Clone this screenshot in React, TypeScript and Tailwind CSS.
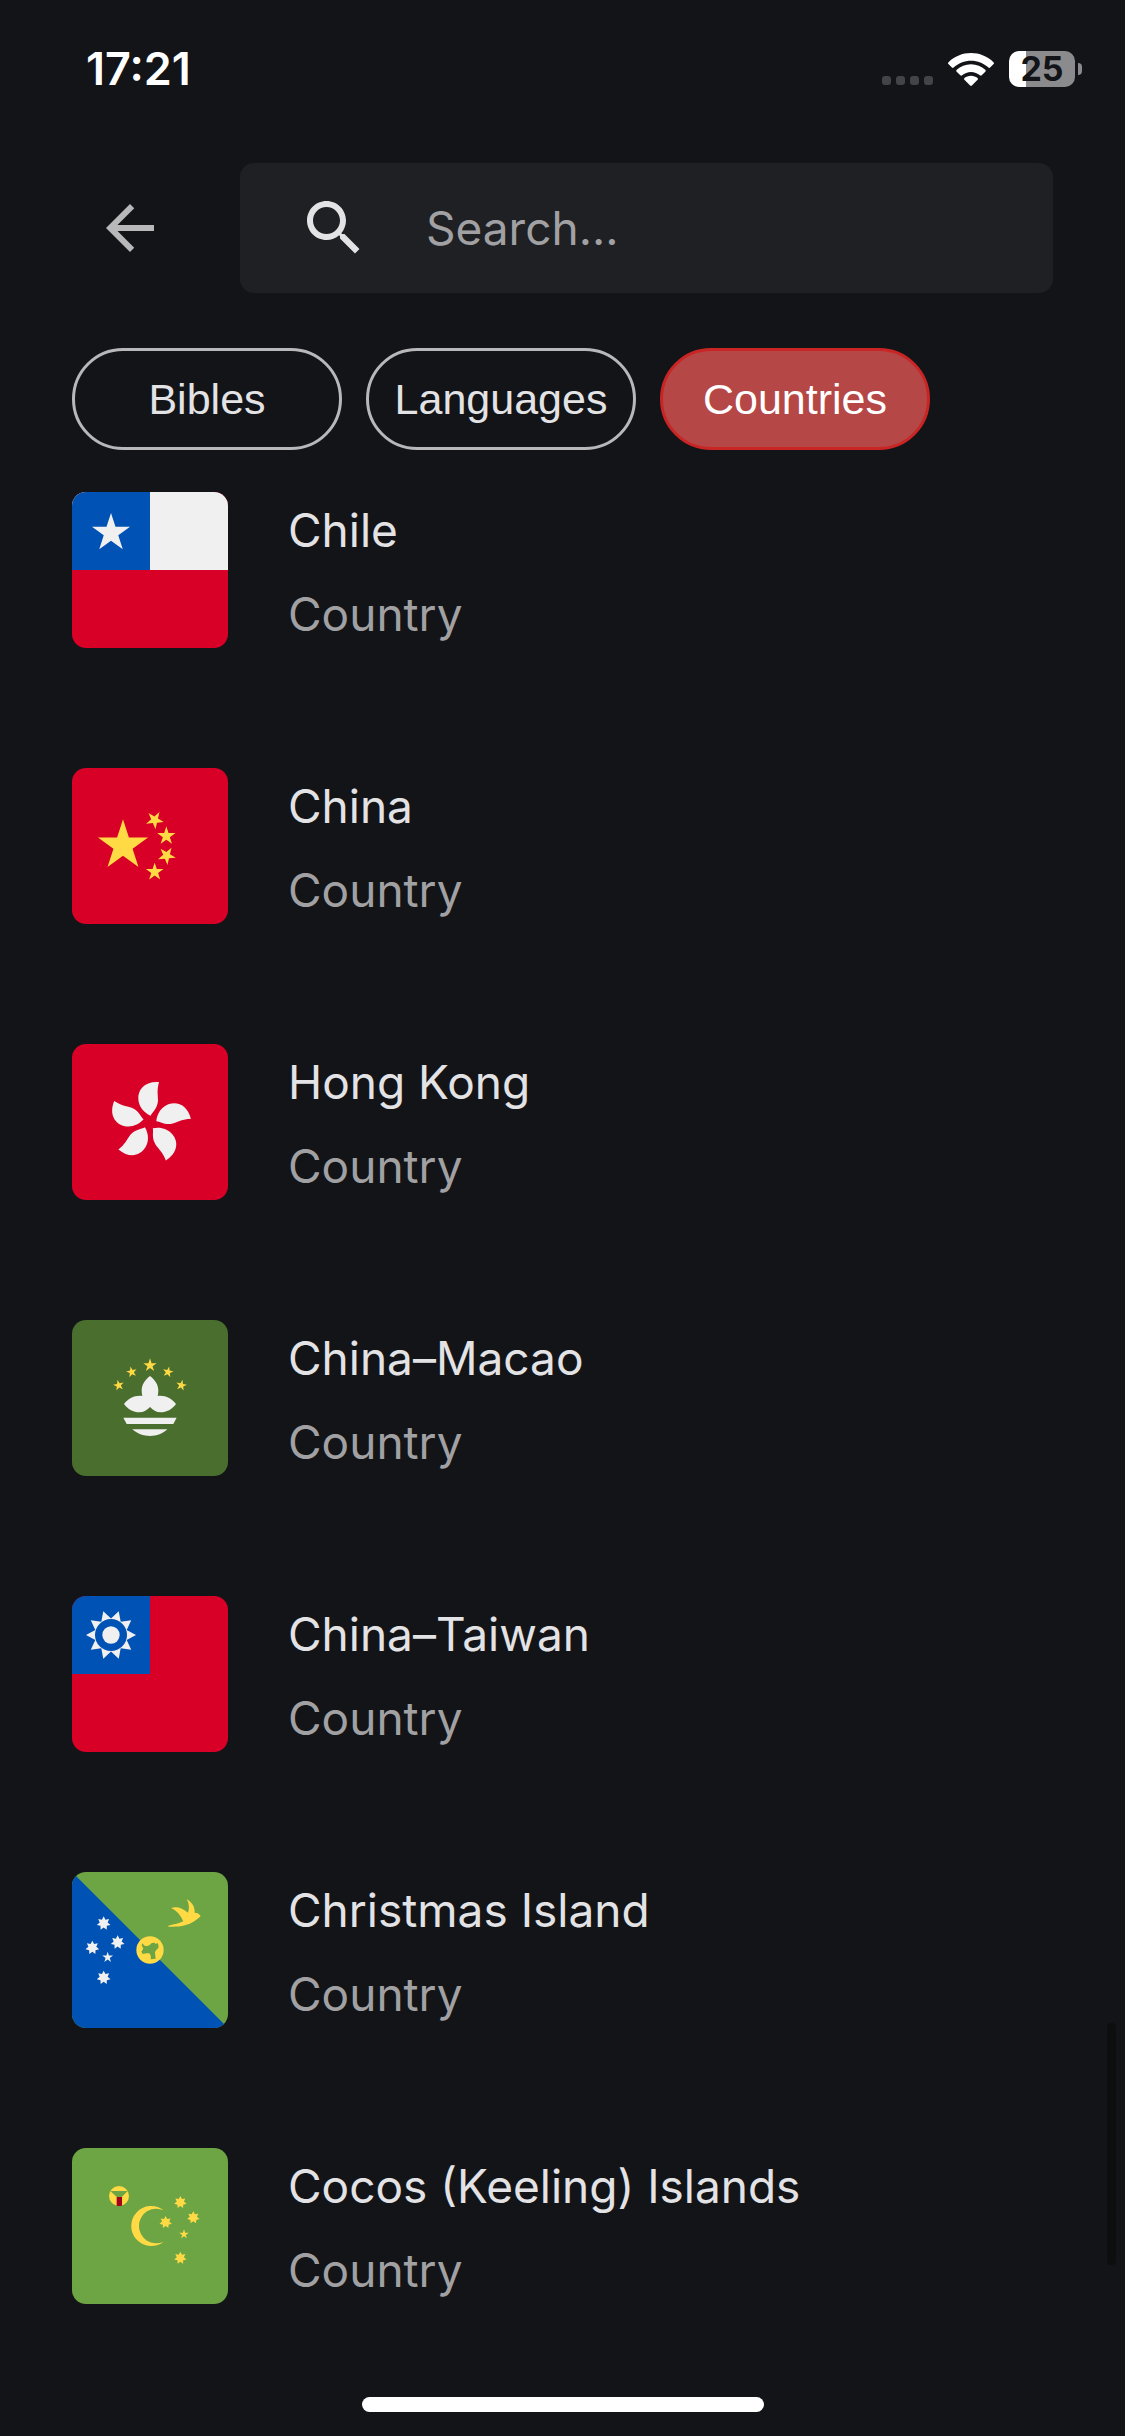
import type { ReactNode } from "react";

const YELLOW = "#ffda44";
const WHITE = "#f0f0f0";
const RED = "#d80027";
const BLUE = "#0052b4";
const GREEN = "#6da544";

type StarProps = {
  x: number;
  y: number;
  r: number;
  fill: string;
  points?: number;
  inner?: number;
  turn?: number;
};

function Star({ x, y, r, fill, points = 5, inner = 0.382, turn = 0 }: StarProps) {
  const corners = Array.from({ length: points * 2 }, (_, i) => {
    const radius = i % 2 === 0 ? r : r * inner;
    const angle = ((turn - 90) * Math.PI) / 180 + (i * Math.PI) / points;
    return `${(x + radius * Math.cos(angle)).toFixed(1)},${(y + radius * Math.sin(angle)).toFixed(1)}`;
  });
  return <polygon points={corners.join(" ")} fill={fill} />;
}

function Flag({ background, children }: { background: string; children: ReactNode }) {
  return (
    <svg viewBox="0 0 468 468" aria-hidden="true" className="size-[156px] shrink-0 rounded-[14px]">
      <rect width="468" height="468" fill={background} />
      {children}
    </svg>
  );
}

const chile = (
  <Flag background={RED}>
    <rect width="468" height="234" fill={WHITE} />
    <rect width="234" height="234" fill={BLUE} />
    <Star x={117} y={123} r={60} fill={WHITE} />
  </Flag>
);

const china = (
  <Flag background={RED}>
    <Star x={153} y={233} r={79} fill={YELLOW} />
    <Star x={248} y={156} r={28} turn={175} fill={YELLOW} />
    <Star x={283} y={204} r={29} fill={YELLOW} />
    <Star x={284} y={263} r={28} turn={175} fill={YELLOW} />
    <Star x={248} y={312} r={28} fill={YELLOW} />
  </Flag>
);

const hongKong = (
  <Flag background={RED}>
    <g transform="translate(233 235)" fill={WHITE}>
      {[0, 72, 144, 216, 288].map((angle) => (
        <path
          key={angle}
          transform={`rotate(${angle})`}
          d="M28-121C-15-124-36-98-34-70C-33-48-18-29 3-20C8-32 23-40 25-65C25-85 21-95 28-121Z"
        />
      ))}
    </g>
  </Flag>
);

const macao = (
  <Flag background="#496e2d">
    <Star x={234} y={136} r={21} fill={YELLOW} />
    <Star x={179} y={156} r={17} turn={-12} fill={YELLOW} />
    <Star x={288} y={156} r={17} turn={12} fill={YELLOW} />
    <Star x={140} y={196} r={17} turn={-12} fill={YELLOW} />
    <Star x={328} y={196} r={17} turn={12} fill={YELLOW} />
    <g fill={WHITE}>
      <path d="M234 168C218 180 209 195 209 212C209 218 210 223 211 228C189 225 168 236 156 252C168 268 184 277 202 277C215 277 226 270 234 261C242 270 253 277 266 277C284 277 300 268 312 252C300 236 279 225 257 228C258 223 259 218 259 212C259 195 250 180 234 168Z" />
      <path d="M154 293H314L304 312H164Z" />
      <path d="M181 328H286C273 341 254 348 234 348S195 341 181 328Z" />
    </g>
  </Flag>
);

const taiwan = (
  <Flag background={RED}>
    <rect width="234" height="234" fill={BLUE} />
    <Star x={117} y={117} r={75} points={10} inner={0.66} turn={18} fill={WHITE} />
    <circle cx="117" cy="117" r="48" fill={BLUE} />
    <circle cx="117" cy="117" r="26" fill={WHITE} />
  </Flag>
);

const christmasIsland = (
  <Flag background={GREEN}>
    <path d="M0 0L468 468H0Z" fill={BLUE} />
    <circle cx="234" cy="234" r="41" fill={YELLOW} />
    <path
      d="M211 214L218 221C226 223 232 222 238 214C244 211 249 212 251 216L256 213C260 217 260 222 259 228C254 234 248 237 249 243L251 260L236 262C237 255 237 250 233 245C226 242 219 246 212 246L208 239L214 230L209 220Z"
      fill={GREEN}
    />
    <path
      d="M344 82C360 90 369 105 368 122C376 122 382 125 386 133C374 145 359 155 339 160C322 165 304 164 289 164V161C309 157 322 154 334 148C326 130 314 115 297 108C314 102 332 108 348 122C352 110 352 95 344 82Z"
      fill={YELLOW}
    />
    <Star x={95} y={154} r={21} points={7} inner={0.58} fill={WHITE} />
    <Star x={137} y={211} r={21} points={7} inner={0.58} fill={WHITE} />
    <Star x={61} y={227} r={21} points={7} inner={0.58} fill={WHITE} />
    <Star x={95} y={317} r={21} points={7} inner={0.58} fill={WHITE} />
    <Star x={107} y={256} r={17} fill={WHITE} />
  </Flag>
);

const cocosIslands = (
  <Flag background={GREEN}>
    <circle cx="141" cy="144" r="30" fill={YELLOW} />
    <path d="M115 129H167L149 147H134Z" fill={GREEN} />
    <path d="M134 147H150V173Q142 175 134 173Z" fill="#a2001d" />
    <path d="M275 187A60 60 0 1 0 275 281A52 52 0 1 1 275 187Z" fill={YELLOW} />
    <Star x={281} y={223} r={19} points={7} inner={0.58} fill={YELLOW} />
    <Star x={325} y={163} r={19} points={7} inner={0.58} fill={YELLOW} />
    <Star x={364} y={209} r={19} points={7} inner={0.58} fill={YELLOW} />
    <Star x={325} y={330} r={19} points={7} inner={0.58} fill={YELLOW} />
    <Star x={336} y={259} r={15} fill={YELLOW} />
  </Flag>
);

const countries = [
  { name: "Chile", flag: chile },
  { name: "China", flag: china },
  { name: "Hong Kong", flag: hongKong },
  { name: "China–Macao", flag: macao },
  { name: "China–Taiwan", flag: taiwan },
  { name: "Christmas Island", flag: christmasIsland },
  { name: "Cocos (Keeling) Islands", flag: cocosIslands },
];

const filters = [
  { label: "Bibles", active: false },
  { label: "Languages", active: false },
  { label: "Countries", active: true },
];

function StatusBar() {
  return (
    <div className="flex h-[163px] items-start justify-between pt-[42px] pr-[43px] pl-[86px] text-white">
      <time className="text-[45px] leading-[54px] font-semibold">17:21</time>
      <div className="flex h-[54px] items-center">
        <div className="mt-[23px] mr-[15px] flex gap-[5px]">
          {[0, 1, 2, 3].map((dot) => (
            <span key={dot} className="size-[9px] rounded-[3px] bg-[#434447]" />
          ))}
        </div>
        <svg viewBox="0 0 46 33" aria-label="Wi-Fi" className="mr-[15px] h-[33px] w-[46px]" fill="currentColor">
          <path d="M23 0C31.500 0 39.500 3.300 45.500 9.200C46.100 9.800 46.100 10.500 45.600 11.100L42.100 14.600C41.600 15.100 40.900 15.100 40.400 14.600C35.700 10.200 29.500 7.700 23 7.700S10.300 10.200 5.600 14.600C5.100 15.100 4.400 15.100 3.900 14.600L0.400 11.100C-0.100 10.500-0.100 9.800 0.500 9.200C6.500 3.300 14.500 0 23 0Z" />
          <path d="M23 11.200C28.500 11.200 33.500 13.300 37.300 16.800C37.900 17.400 37.900 18.100 37.300 18.700L33.700 22.300C33.200 22.800 32.500 22.800 31.900 22.300C29.500 20.200 26.400 18.900 23 18.900S16.500 20.200 14.100 22.300C13.500 22.800 12.800 22.800 12.300 22.300L8.700 18.700C8.100 18.100 8.100 17.400 8.700 16.800C12.500 13.300 17.500 11.200 23 11.200Z" />
          <path d="M23 22.800C25.700 22.800 27.700 23.700 29.500 25.100C30.100 25.600 30.100 26.300 29.600 26.800L23.900 32.500C23.300 33.100 22.700 33.100 22.100 32.500L16.400 26.800C15.900 26.300 15.900 25.600 16.500 25.100C18.300 23.700 20.300 22.800 23 22.800Z" />
        </svg>
        <div className="flex h-9 w-[66px] items-center justify-center rounded-[10px] bg-linear-to-r from-white from-[26%] to-[#8b8b8e] to-[26%] text-[34px] leading-9 font-bold text-[#131418]">
          25
        </div>
        <span className="ml-[3px] h-3 w-1 rounded-r-full bg-[#8b8b8e]" />
      </div>
    </div>
  );
}

export default function App() {
  return (
    <div className="relative flex min-h-screen flex-col bg-[#131418] font-['Inter','Liberation_Sans',sans-serif] text-[#e3e3e5]">
      <StatusBar />

      <header className="flex items-center gap-[50px] pr-[72px] pl-[70px]">
        <button type="button" aria-label="Back" className="flex size-[120px] shrink-0 items-center justify-center text-[#b8b8ba]">
          <svg viewBox="0 0 24 24" aria-hidden="true" className="size-[72px]" fill="currentColor">
            <path d="M20 11H7.830l5.590-5.590L12 4l-8 8 8 8 1.410-1.410L7.830 13H20v-2z" />
          </svg>
        </button>
        <label className="flex h-[130px] min-w-0 flex-1 items-center gap-14 rounded-[14px] bg-[#1f2023] px-[58px]">
          <svg viewBox="0 0 24 24" aria-hidden="true" className="size-[72px] shrink-0" fill="currentColor">
            <path d="M15.500 14h-.79l-.28-.27C15.410 12.590 16 11.110 16 9.500 16 5.910 13.090 3 9.500 3S3 5.910 3 9.500 5.910 16 9.500 16c1.610 0 3.090-.59 4.230-1.570l.27.28v.79l5 4.990L20.490 19l-4.990-5zm-6 0C7.010 14 5 11.990 5 9.500S7.010 5 9.500 5 14 7.010 14 9.500 11.990 14 9.500 14z" />
          </svg>
          <input
            type="text"
            aria-label="Search"
            placeholder="Search..."
            className="min-w-0 flex-1 bg-transparent text-[46px] leading-[72px] outline-none placeholder:text-[#a1a1a3]"
          />
        </label>
      </header>

      <div className="mt-[55px] flex gap-6 px-[72px]">
        {filters.map(({ label, active }) => (
          <button
            key={label}
            type="button"
            aria-pressed={active}
            className={`h-[102px] w-[270px] rounded-full border-3 font-['Liberation_Sans',sans-serif] text-[43px] leading-[60px] ${
              active ? "border-[#c92525] bg-[#b54747] text-white" : "border-[#b8b8ba]"
            }`}
          >
            {label}
          </button>
        ))}
      </div>

      <ul className="mt-[34px] mb-12 flex flex-col gap-[104px] px-[72px]">
        {countries.map(({ name, flag }) => (
          <li key={name} className="flex items-center gap-[60px]">
            {flag}
            <div className="min-w-0 pt-1 text-[46px] leading-[84px]">
              <p>{name}</p>
              <p className="text-[#a1a1a3]">Country</p>
            </div>
          </li>
        ))}
      </ul>

      <div className="mt-auto flex justify-center pb-6">
        <span className="h-[15px] w-[402px] rounded-full bg-white" />
      </div>

      <span className="absolute right-[9px] bottom-[171px] h-[242px] w-[9px] rounded-full bg-[#0d0e10]" />
    </div>
  );
}
